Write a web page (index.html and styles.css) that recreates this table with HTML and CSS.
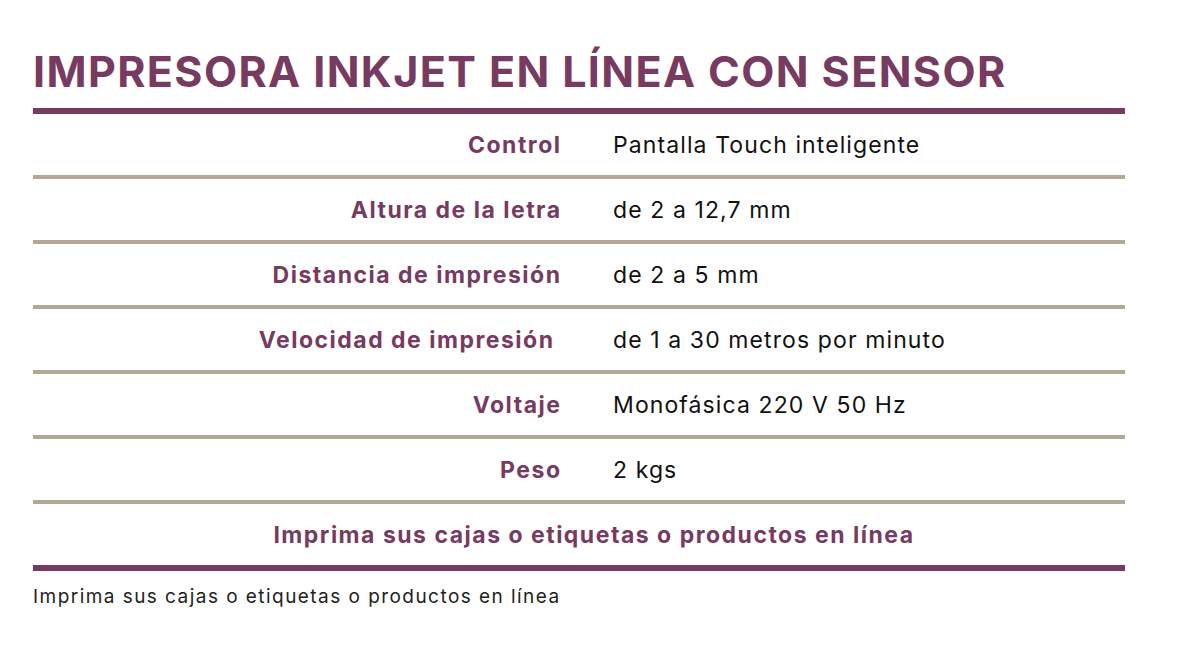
FILE: index.html
```html
<!DOCTYPE html>
<html lang="es">
<head>
<meta charset="utf-8">
<title>Impresora Inkjet en línea con sensor</title>
<link rel="stylesheet" href="styles.css">
</head>
<body>
<main class="sheet">
  <h1 class="title">IMPRESORA INKJET EN LÍNEA CON SENSOR</h1>
  <div class="specs">
    <div class="row"><div class="label">Control</div><div class="value">Pantalla Touch inteligente</div></div>
    <div class="row"><div class="label">Altura de la letra</div><div class="value">de 2 a 12,7 mm</div></div>
    <div class="row"><div class="label">Distancia de impresión</div><div class="value">de 2 a 5 mm</div></div>
    <div class="row"><div class="label label-shift">Velocidad de impresión</div><div class="value">de 1 a 30 metros por minuto</div></div>
    <div class="row"><div class="label">Voltaje</div><div class="value">Monofásica 220 V 50 Hz</div></div>
    <div class="row"><div class="label">Peso</div><div class="value">2 kgs</div></div>
    <div class="row row-full"><div class="full">Imprima sus cajas o etiquetas o productos en línea</div></div>
  </div>
  <p class="caption">Imprima sus cajas o etiquetas o productos en línea</p>
</main>
</body>
</html>
```
FILE: styles.css
```css
html, body {
  margin: 0;
  padding: 0;
  background: #ffffff;
}
body {
  font-family: Inter, "Liberation Sans", Arial, sans-serif;
  color: #111111;
}
.sheet {
  width: 1092px;
  margin-left: 33px;
  padding-top: 40px;
}
.title {
  margin: 0;
  height: 68px;
  font-size: 43px;
  line-height: 62px;
  font-weight: 700;
  color: #773a61;
  letter-spacing: 1.4px;
  white-space: nowrap;
}
.specs {
  border-top: 6px solid #773a61;
  border-bottom: 6px solid #773a61;
}
.row {
  display: grid;
  grid-template-columns: 527px 1fr;
  column-gap: 53px;
  align-items: center;
  height: 61px;
  border-bottom: 4px solid #b3a797;
}
.row-full {
  display: flex;
  justify-content: center;
  padding-left: 30px;
  border-bottom: none;
}
.label {
  text-align: right;
  font-weight: 700;
  font-size: 23px;
  letter-spacing: 1.5px;
  margin-right: -1.5px;
  color: #773a61;
}
.label-shift {
  padding-right: 7px;
}
.value {
  font-size: 23px;
  letter-spacing: 1.1px;
  color: #111111;
}
.full {
  font-weight: 700;
  font-size: 23px;
  letter-spacing: 1.5px;
  color: #773a61;
}
.caption {
  margin: 14px 0 0;
  font-size: 19px;
  letter-spacing: 1.45px;
  color: #222222;
}
```
